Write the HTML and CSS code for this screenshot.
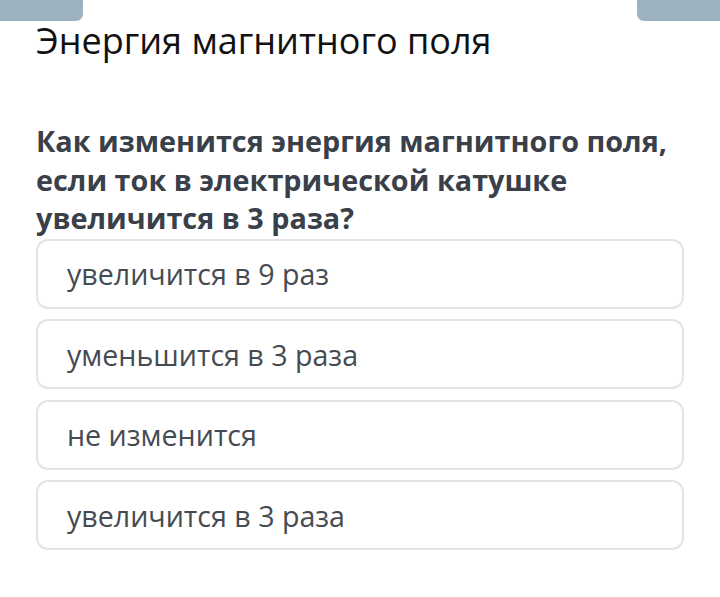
FILE: index.html
```html
<!DOCTYPE html>
<html lang="ru">
<head>
<meta charset="utf-8">
<link rel="stylesheet" href="styles.css">
</head>
<body>
<div class="tabs">
  <div class="tab tab-left"></div>
  <div class="tab tab-right"></div>
</div>
<main class="content">
  <h1 class="title">Энергия магнитного поля</h1>
  <h2 class="question">Как изменится энергия магнитного поля, если ток в электрической катушке увеличится в 3 раза?</h2>
  <ul class="options">
    <li class="option">увеличится в 9 раз</li>
    <li class="option">уменьшится в 3 раза</li>
    <li class="option">не изменится</li>
    <li class="option">увеличится в 3 раза</li>
  </ul>
</main>
</body>
</html>
```

FILE: styles.css
```css
html, body {
  margin: 0;
  padding: 0;
  background: #ffffff;
}
body {
  font-family: "Open Sans", "Noto Sans", sans-serif;
  width: 720px;
  height: 597px;
  overflow: hidden;
}
.tabs {
  display: flex;
  justify-content: space-between;
  height: 21px;
}
.tab {
  width: 83px;
  height: 21px;
  background: #9db3c1;
}
.tab-left { border-bottom-right-radius: 7px; }
.tab-right { border-bottom-left-radius: 7px; }
.content {
  padding: 0 36px;
}
.title {
  margin: 0;
  font-weight: 400;
  font-size: 36px;
  line-height: 40px;
  color: #111111;
}
.question {
  margin: 61px 0 0 0;
  font-weight: 700;
  font-size: 28.8px;
  line-height: 38.5px;
  color: #3a4049;
  width: 648px;
}
.options {
  list-style: none;
  margin: 1px 0 0 0;
  padding: 0;
  display: flex;
  flex-direction: column;
  gap: 10.5px;
  width: 648px;
}
.option {
  box-sizing: border-box;
  height: 70px;
  border: 2px solid #e3e4e5;
  border-radius: 12px;
  padding: 0 0 0 29px;
  display: flex;
  align-items: center;
  font-size: 28.6px;
  color: #454b52;
}
```
